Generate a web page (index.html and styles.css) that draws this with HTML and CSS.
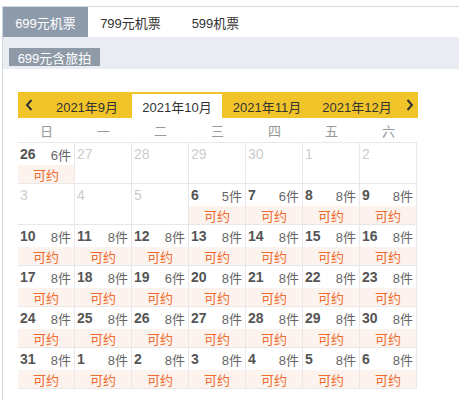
FILE: index.html
```html
<!DOCTYPE html>
<html>
<head>
<meta charset="utf-8">
<link rel="stylesheet" href="styles.css">
</head>
<body>
<div class="wrap">
  <div class="tabs">
    <div class="tab active">699元机票</div>
    <div class="tab">799元机票</div>
    <div class="tab">599机票</div>
  </div>
  <div class="sub"><span class="tag">699元含旅拍</span></div>
  <div class="cal">
    <div class="head">
      <div class="arrow left"><svg width="8" height="12" viewBox="0 0 8 12"><path d="M6.5 1 L2 6 L6.5 11" fill="none" stroke="#333" stroke-width="2"/></svg></div>
      <div class="month">2021年9月</div>
      <div class="month cur">2021年10月</div>
      <div class="month">2021年11月</div>
      <div class="month">2021年12月</div>
      <div class="arrow right"><svg width="8" height="12" viewBox="0 0 8 12"><path d="M1.5 1 L6 6 L1.5 11" fill="none" stroke="#333" stroke-width="2"/></svg></div>
    </div>
    <div class="week">
      <span>日</span><span>一</span><span>二</span><span>三</span><span>四</span><span>五</span><span>六</span>
    </div>
    <div class="grid">
      <div class="cell"><div class="top"><span class="d">26</span><span class="n">6件</span></div><div class="ok">可约</div></div>
      <div class="cell off"><div class="top"><span class="d">27</span></div></div>
      <div class="cell off"><div class="top"><span class="d">28</span></div></div>
      <div class="cell off"><div class="top"><span class="d">29</span></div></div>
      <div class="cell off"><div class="top"><span class="d">30</span></div></div>
      <div class="cell off"><div class="top"><span class="d">1</span></div></div>
      <div class="cell off"><div class="top"><span class="d">2</span></div></div>

      <div class="cell off"><div class="top"><span class="d">3</span></div></div>
      <div class="cell off"><div class="top"><span class="d">4</span></div></div>
      <div class="cell off"><div class="top"><span class="d">5</span></div></div>
      <div class="cell"><div class="top"><span class="d">6</span><span class="n">5件</span></div><div class="ok">可约</div></div>
      <div class="cell"><div class="top"><span class="d">7</span><span class="n">6件</span></div><div class="ok">可约</div></div>
      <div class="cell"><div class="top"><span class="d">8</span><span class="n">8件</span></div><div class="ok">可约</div></div>
      <div class="cell"><div class="top"><span class="d">9</span><span class="n">8件</span></div><div class="ok">可约</div></div>

      <div class="cell"><div class="top"><span class="d">10</span><span class="n">8件</span></div><div class="ok">可约</div></div>
      <div class="cell"><div class="top"><span class="d">11</span><span class="n">8件</span></div><div class="ok">可约</div></div>
      <div class="cell"><div class="top"><span class="d">12</span><span class="n">8件</span></div><div class="ok">可约</div></div>
      <div class="cell"><div class="top"><span class="d">13</span><span class="n">8件</span></div><div class="ok">可约</div></div>
      <div class="cell"><div class="top"><span class="d">14</span><span class="n">8件</span></div><div class="ok">可约</div></div>
      <div class="cell"><div class="top"><span class="d">15</span><span class="n">8件</span></div><div class="ok">可约</div></div>
      <div class="cell"><div class="top"><span class="d">16</span><span class="n">8件</span></div><div class="ok">可约</div></div>

      <div class="cell"><div class="top"><span class="d">17</span><span class="n">8件</span></div><div class="ok">可约</div></div>
      <div class="cell"><div class="top"><span class="d">18</span><span class="n">8件</span></div><div class="ok">可约</div></div>
      <div class="cell"><div class="top"><span class="d">19</span><span class="n">6件</span></div><div class="ok">可约</div></div>
      <div class="cell"><div class="top"><span class="d">20</span><span class="n">8件</span></div><div class="ok">可约</div></div>
      <div class="cell"><div class="top"><span class="d">21</span><span class="n">8件</span></div><div class="ok">可约</div></div>
      <div class="cell"><div class="top"><span class="d">22</span><span class="n">8件</span></div><div class="ok">可约</div></div>
      <div class="cell"><div class="top"><span class="d">23</span><span class="n">8件</span></div><div class="ok">可约</div></div>

      <div class="cell"><div class="top"><span class="d">24</span><span class="n">8件</span></div><div class="ok">可约</div></div>
      <div class="cell"><div class="top"><span class="d">25</span><span class="n">8件</span></div><div class="ok">可约</div></div>
      <div class="cell"><div class="top"><span class="d">26</span><span class="n">8件</span></div><div class="ok">可约</div></div>
      <div class="cell"><div class="top"><span class="d">27</span><span class="n">8件</span></div><div class="ok">可约</div></div>
      <div class="cell"><div class="top"><span class="d">28</span><span class="n">8件</span></div><div class="ok">可约</div></div>
      <div class="cell"><div class="top"><span class="d">29</span><span class="n">8件</span></div><div class="ok">可约</div></div>
      <div class="cell"><div class="top"><span class="d">30</span><span class="n">8件</span></div><div class="ok">可约</div></div>

      <div class="cell"><div class="top"><span class="d">31</span><span class="n">8件</span></div><div class="ok">可约</div></div>
      <div class="cell"><div class="top"><span class="d">1</span><span class="n">8件</span></div><div class="ok">可约</div></div>
      <div class="cell"><div class="top"><span class="d">2</span><span class="n">8件</span></div><div class="ok">可约</div></div>
      <div class="cell"><div class="top"><span class="d">3</span><span class="n">8件</span></div><div class="ok">可约</div></div>
      <div class="cell"><div class="top"><span class="d">4</span><span class="n">8件</span></div><div class="ok">可约</div></div>
      <div class="cell"><div class="top"><span class="d">5</span><span class="n">8件</span></div><div class="ok">可约</div></div>
      <div class="cell"><div class="top"><span class="d">6</span><span class="n">8件</span></div><div class="ok">可约</div></div>
    </div>
  </div>
</div>
</body>
</html>
```
FILE: styles.css
```css
html, body {
  margin: 0;
  padding: 0;
  background: #fff;
}
body {
  font-family: "Liberation Sans", "Noto Sans CJK SC", sans-serif;
  font-size: 13px;
  color: #333;
}
.wrap {
  margin: 6px 0 0 2px;
  border-top: 1px solid #d3d8e2;
  border-left: 1px solid #cfd5e1;
  min-height: 394px;
  box-sizing: border-box;
}
.tabs {
  display: flex;
  height: 30px;
  background: #fff;
}
.tab {
  width: 85px;
  display: flex;
  align-items: center;
  justify-content: center;
  color: #333;
}
.tab.active {
  background: #8e9bab;
  color: #fff;
}
.sub {
  height: 32px;
  background: #e9edf1;
  padding: 11px 0 0 6px;
  box-sizing: border-box;
}
.tag {
  display: flex;
  width: 91px;
  height: 18px;
  align-items: center;
  justify-content: center;
  background: #8e9aa8;
  color: #fff;
}
.cal {
  margin: 23px 0 0 15px;
  width: 400px;
}
.head {
  display: flex;
  height: 26px;
  background: #f1c52a;
}
.arrow {
  display: flex;
  align-items: center;
}
.arrow.left {
  width: 24px;
  padding-left: 7px;
  box-sizing: border-box;
}
.arrow.right {
  width: 16px;
  justify-content: center;
}
.month {
  width: 90px;
  margin-top: 2px;
  display: flex;
  align-items: center;
  justify-content: center;
  color: #333;
}
.month.cur {
  background: #fff;
}
.week {
  display: grid;
  grid-template-columns: repeat(7, 57px);
  height: 24px;
  align-items: center;
  color: #999;
}
.week span {
  text-align: center;
}
.grid {
  display: grid;
  grid-template-columns: repeat(7, 57px);
  border-top: 1px solid #e8e8e8;
  width: 399px;
}
.cell {
  height: 41px;
  border-right: 1px solid #e8e8e8;
  border-bottom: 1px solid #e8e8e8;
  box-sizing: border-box;
}
.top {
  height: 22px;
  display: flex;
  justify-content: space-between;
  align-items: center;
  padding: 0 3px 0 2px;
}
.d {
  font-size: 14px;
  font-weight: bold;
  color: #555;
}
.n {
  font-size: 13px;
  color: #666;
}
.off .d {
  font-weight: normal;
  color: #ccc;
}
.ok {
  height: 18px;
  background: #fcf3ee;
  color: #ef6a2c;
  display: flex;
  align-items: center;
  justify-content: center;
}
```
